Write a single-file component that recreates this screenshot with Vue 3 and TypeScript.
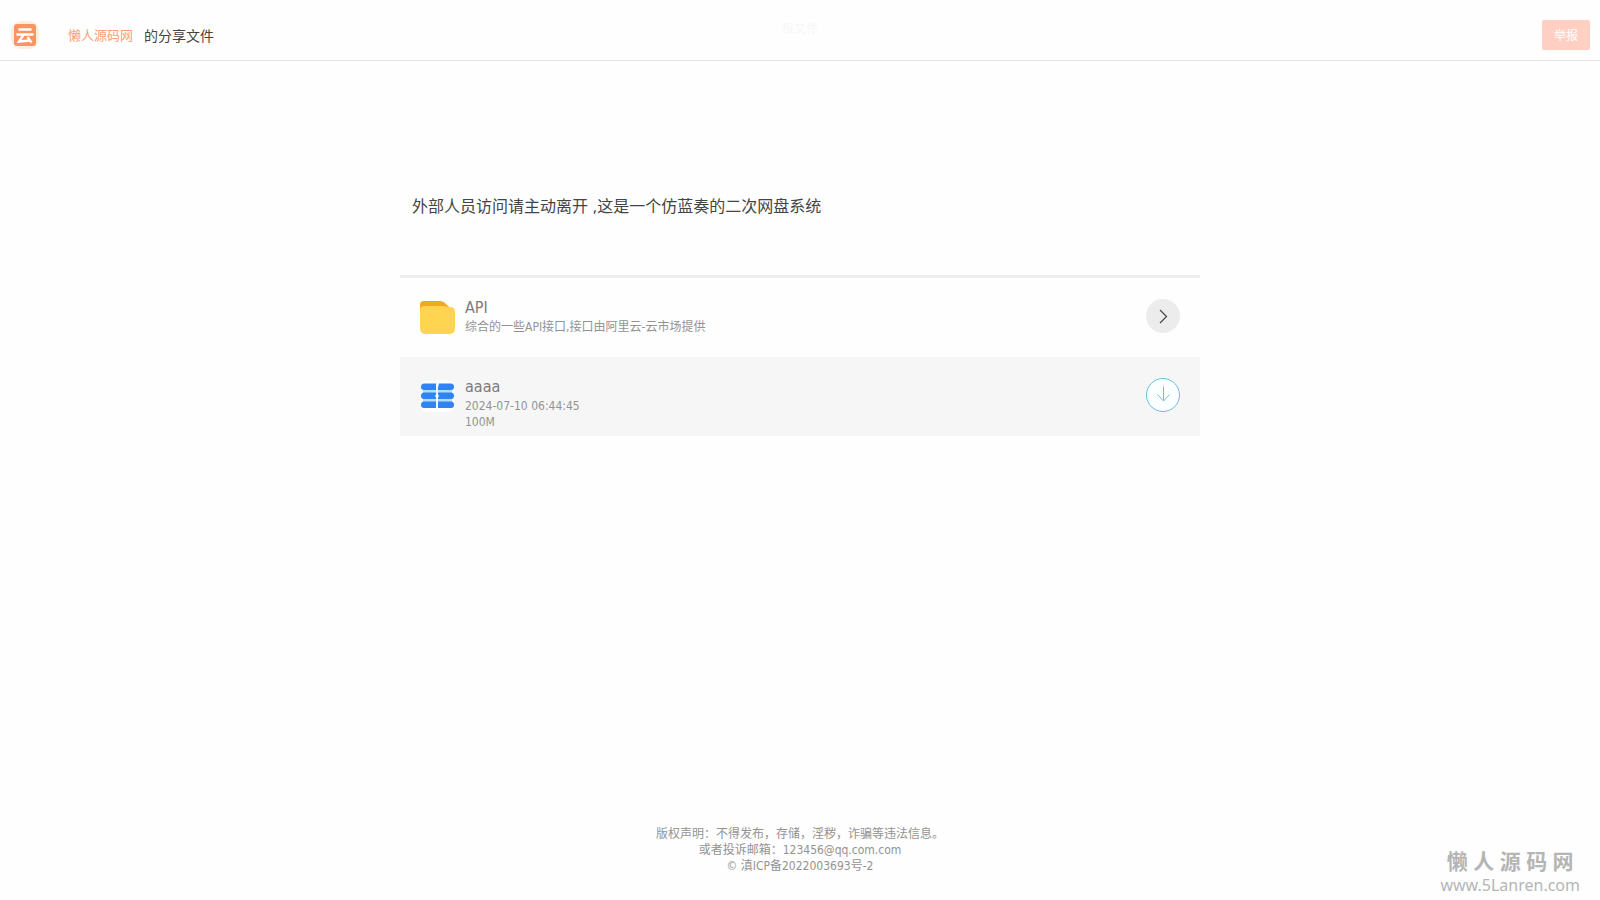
<script setup lang="ts">
interface Entry {
  kind: 'folder' | 'file'
  name: string
  details: string[]
}

const owner = '懒人源码网'
const entries: Entry[] = [
  { kind: 'folder', name: 'API', details: ['综合的一些API接口,接口由阿里云-云市场提供'] },
  { kind: 'file', name: 'aaaa', details: ['2024-07-10 06:44:45', '100M'] },
]
</script>

<template>
  <div class="page">
    <header class="bar">
      <svg class="logo" viewBox="0 0 30 30" aria-hidden="true">
        <rect x="1" y="1" width="28" height="28" rx="11" fill="#fdeee0" />
        <rect x="4" y="4" width="22" height="22" rx="3" fill="#fa9465" />
        <path d="M8.5 9.5H21.5M6.5 14.5H23.5M13.5 15L9 21.5L20.5 20.5M17.5 17L21.5 22.5" fill="none" stroke="#fff" stroke-width="2.4" />
      </svg>
      <a class="owner" href="#">{{ owner }}</a>
      <span class="suffix">的分享文件</span>
      <span class="crumb">根文件</span>
      <button class="report" type="button">举报</button>
    </header>

    <main class="content">
      <p class="notice">外部人员访问请主动离开 ,这是一个仿蓝奏的二次网盘系统</p>
      <ul class="list">
        <li v-for="e in entries" :key="e.name" class="row" :class="e.kind">
          <svg v-if="e.kind === 'folder'" class="icon" viewBox="0 0 36 36" aria-hidden="true">
            <path d="M0 14V6Q0 2 4 2H20Q23 2 25 4L29 8V14Z" fill="#efaa20" />
            <path d="M0 10Q1 7 5 7H22Q24 7 26 7.500Q28 8 30 8Q35 8 35 13V29Q35 35 29 35H6Q0 35 0 29Z" fill="#ffd451" />
          </svg>
          <svg v-else class="icon" viewBox="0 0 36 36" aria-hidden="true">
            <rect x="1" y="2" width="33" height="32" rx="6" fill="#fcfdff" />
            <path d="M3 9H32V28H3Z" fill="#b4dafc" />
            <g fill="#2f83f2">
              <path d="M4 5.500H16V12H4Q1 12 1 9Q1 5.500 4 5.500Z" />
              <path d="M19 5.500H31Q34 5.500 34 9Q34 12 31 12H18Q18 7.500 19 5.500Z" />
              <path d="M4 14.500H16V21H4Q1 21 1 18Q1 14.500 4 14.500Z" />
              <path d="M18 14.500H31Q34 14.500 34 18Q34 21 31 21H18Z" />
              <path d="M4 23.500H16V30H4Q1 30 1 27Q1 23.500 4 23.500Z" />
              <path d="M18 23.500H31Q34 23.500 34 27Q34 30 31 30H18Z" />
            </g>
            <path d="M17.500 5Q16 8 17 12V31" fill="none" stroke="#fff" stroke-width="1.500" />
            <circle cx="17" cy="18" r="1.800" fill="#fff" />
          </svg>
          <div class="text">
            <span class="name">{{ e.name }}</span>
            <span v-for="d in e.details" :key="d" class="detail">{{ d }}</span>
          </div>
          <button class="action" type="button" :aria-label="e.kind === 'folder' ? '打开' : '下载'">
            <svg v-if="e.kind === 'folder'" viewBox="0 0 34 34" aria-hidden="true">
              <circle cx="17" cy="17" r="17" fill="#ececec" />
              <path d="M14 11L20.500 17.500L14 24" fill="none" stroke="#4a4a4a" stroke-width="1.300" />
            </svg>
            <svg v-else viewBox="0 0 34 34" aria-hidden="true">
              <circle cx="17" cy="17" r="16.500" fill="#fcffff" stroke="#69bfd8" />
              <path d="M17.500 8.500V23M11.500 16.500L17.500 23L23.500 16.500" fill="none" stroke="#74c0d6" stroke-width="1" />
            </svg>
          </button>
        </li>
      </ul>
    </main>

    <footer class="footer">
      <p>版权声明：不得发布，存储，淫秽，诈骗等违法信息。</p>
      <p>或者投诉邮箱：123456@qq.com.com</p>
      <p>© 滇ICP备2022003693号-2</p>
    </footer>

    <div class="mark">
      <strong>懒 人 源 码 网</strong>
      <span>www.5Lanren.com</span>
    </div>
  </div>
</template>

<style>
body {
  margin: 0;
  background: #fefefe;
}
</style>

<style scoped>
.page {
  position: relative;
  display: flex;
  flex-direction: column;
  min-height: 100vh;
  box-sizing: border-box;
  font-family: "DejaVu Sans Condensed", "Noto Sans", "Noto Sans CJK SC", sans-serif;
  font-size: 12px;
  line-height: 16px;
  color: #939393;
}

p,
ul {
  margin: 0;
  padding: 0;
}

.bar {
  position: relative;
  display: flex;
  align-items: center;
  height: 50px;
  padding: 10px 10px 0;
  border-bottom: 1px solid #e4e4e4;
  font-family: "Noto Sans CJK SC", sans-serif;
}

.logo {
  width: 30px;
  height: 30px;
}

.owner {
  margin-left: 28px;
  font-size: 13px;
  color: #f9a07a;
  text-decoration: none;
}

.suffix {
  margin-left: 11px;
  font-size: 14px;
  color: #444;
}

.crumb {
  position: absolute;
  top: 20px;
  left: 50%;
  transform: translateX(-50%);
  color: #f6f6f6;
}

.report {
  width: 48px;
  height: 30px;
  margin-left: auto;
  padding: 0;
  border: 0;
  border-radius: 2px;
  background: #ffcfc3;
  color: #fff;
  font: inherit;
}

.content {
  width: 100%;
  max-width: 800px;
  margin: 0 auto;
}

.notice {
  padding: 134px 12px 56px;
  font-size: 16px;
  line-height: 24px;
  color: #444;
}

.list {
  border-top: 3px solid #ededed;
  list-style: none;
}

.row {
  display: flex;
  align-items: flex-start;
  height: 79px;
  padding: 21px 20px 0;
  box-sizing: border-box;
}

.row.file {
  background: #f6f6f6;
}

.icon {
  width: 36px;
  height: 36px;
}

.text {
  display: flex;
  flex: 1;
  flex-direction: column;
  margin-left: 9px;
}

.name {
  margin-bottom: 2px;
  font-size: 16px;
  line-height: 18px;
  color: #7c7c7c;
}

.action {
  width: 34px;
  height: 34px;
  padding: 0;
  border: 0;
  background: none;
}

.action svg {
  display: block;
}

.footer {
  margin-top: auto;
  padding-bottom: 26px;
  text-align: center;
}

.mark {
  position: absolute;
  right: 20px;
  bottom: 3px;
  display: flex;
  flex-direction: column;
  align-items: center;
  font-family: "Noto Sans", "Noto Sans CJK SC", sans-serif;
  font-size: 16px;
  line-height: 24px;
  color: #b5b5b5;
}

.mark strong {
  font-size: 21px;
}
</style>
